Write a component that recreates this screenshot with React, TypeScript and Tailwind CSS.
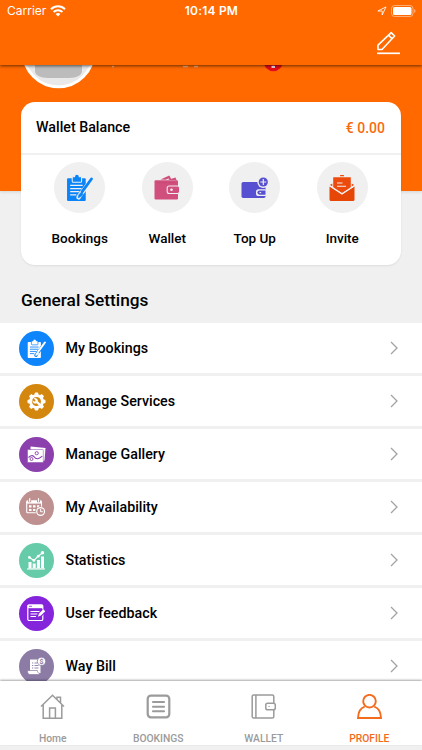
import type { ReactNode } from "react";

type IconProps = { fg: string; bg: string; size: number };

function ClipboardIcon({ fg, bg, size }: IconProps) {
  return (
    <svg width={size} height={size} viewBox="-1 0 26 26" fill="none">
      <path d="M1 4h16a1 1 0 0 1 1 1v20a1 1 0 0 1-1 1H1a1 1 0 0 1-1-1V5a1 1 0 0 1 1-1z" fill={fg} />
      <path d="M5 2.6h2.2a2.3 2.3 0 0 1 4.6 0H14V7a1 1 0 0 1-1 1H6a1 1 0 0 1-1-1z" fill={fg} stroke={bg} strokeWidth="1" />
      <path d="M3 11h12M3 14h11M3 17h9M3 20h6" stroke={bg} strokeWidth="1.2" />
      <path d="M24 5.2 12.2 20.6l-1 1.800" stroke={bg} strokeWidth="4.400" strokeLinecap="round" />
      <path d="M23.5 4.8 14.6 17" stroke={fg} strokeWidth="2.7" strokeLinecap="round" />
      <path d="m13.6 17.600-2.200 2.400-.7 3 2.800-1.400 2.100-2.400z" fill={fg} stroke={fg} strokeWidth=".6" />
    </svg>
  );
}

function WalletIcon() {
  return (
    <svg width="26" height="25" viewBox="-.5 0 26 25" fill="none">
      <path d="m6 4.500 8.800-4 1.800 3.200-1.700.8-.6-1.100-3.300 1.300zM13 5l8-2.600L22 5z" fill="#d04f7d" />
      <rect x="0" y="5.300" width="23.500" height="19.200" rx="1.200" fill="#d04f7d" />
      <path d="M2.500 7.700h18" stroke="#c84674" strokeWidth=".8" />
      <rect x="12.700" y="11" width="12.400" height="7.500" rx="2" fill="#d04f7d" stroke="#f0f0f0" strokeWidth="1.100" />
      <circle cx="17" cy="14.700" r="1.300" fill="#f0f0f0" />
    </svg>
  );
}

function TopUpIcon() {
  return (
    <svg width="28" height="22" viewBox="0 0 28 22" fill="none">
      <rect x=".5" y="5" width="24" height="16" rx="1.700" fill="#5750d1" />
      <circle cx="22.300" cy="5" r="6" fill="#f0f0f0" />
      <circle cx="22.300" cy="5" r="4.600" fill="#5750d1" />
      <path d="M22.300 2v6M19.300 5h6" stroke="#f0f0f0" strokeWidth="1.200" />
      <rect x="15" y="12.200" width="11" height="6.800" rx="2.600" fill="#f0f0f0" />
      <path d="M24.500 13.500h-6a2.100 2.100 0 0 0 0 4.200h6z" fill="#5750d1" />
      <path d="M18.500 15.600h1.700" stroke="#f0f0f0" strokeWidth="1.100" />
    </svg>
  );
}

function InviteIcon() {
  return (
    <svg width="26" height="26" viewBox="0 0 26 26" fill="none">
      <path d="M11 1.200a2 2 0 0 1 4 0z" fill="#ec4b0d" />
      <path d="M4.200 2.200h17.600v10.700L13 18l-8.800-5.100z" fill="#ec4b0d" />
      <path d="M3.300 8.400v3L.8 10zM22.700 8.400v3l2.500-1.400z" fill="#ec4b0d" />
      <path d="m.5 11.400 12.500 7.700 12.500-7.700V24.500a1.500 1.500 0 0 1-1.500 1.500H2a1.500 1.500 0 0 1-1.500-1.500z" fill="#e64707" />
      <path d="m1 10.900 12 8.100 12-8.100" stroke="#f0f0f0" strokeWidth="1.300" />
      <path d="M8 8h5.500M8 11.300h9" stroke="#f0f0f0" strokeWidth="1.100" />
    </svg>
  );
}

function GearIcon() {
  const teeth = [0, 45, 90, 135, 180, 225, 270, 315];
  return (
    <svg width="19" height="19" viewBox="0 0 20 20" fill="none">
      {teeth.map((angle) => (
        <path key={angle} d="M8.300 3 8.700 1h2.600l.4 2z" fill="#fff" stroke="#fff" strokeLinejoin="round" transform={`rotate(${angle} 10 10)`} />
      ))}
      <circle cx="10" cy="10" r="6.200" stroke="#fff" strokeWidth="3" />
      <path d="m9.500 9.500 4.800 4.800" stroke="#fff" strokeWidth="2.400" />
      <path d="M7 6.800 8.900 8.700 8.700 10 7.500 10.100 5.900 8.400A3 3 0 0 0 9.500 12 3 3 0 0 0 11.300 8.300 3 3 0 0 0 7 6.800z" fill="#fff" />
    </svg>
  );
}

function GalleryIcon() {
  return (
    <svg width="19" height="17" viewBox="0 0 19 17" fill="none">
      <path d="m3.500 3 .1-2.400L18.500 2l-1 12.500-2 .4" fill="#fff" />
      <rect x=".5" y="3.500" width="15.800" height="13" rx=".6" fill="#fff" stroke="#8b40ad" strokeWidth=".5" />
      <path d="M1.500 11.500c2-2 4-2.500 5.500-.8 2 2.800 4.500 2.800 8.300-.5" stroke="#8b40ad" strokeWidth="1.100" />
      <circle cx="9.700" cy="7.200" r="1.600" stroke="#8b40ad" strokeWidth=".9" />
      <circle cx="4.500" cy="13" r="1.500" stroke="#8b40ad" strokeWidth=".9" />
    </svg>
  );
}

function CalendarIcon() {
  return (
    <svg width="20" height="19" viewBox="0 0 20 19" fill="none">
      <rect x=".7" y="2.700" width="14.800" height="12" rx="1" stroke="#fff" strokeWidth="1.100" />
      <path d="M.7 3h14.800v2.600H.7z" fill="#fff" />
      <path d="M3.700.3v4M12.500.3v4" stroke="#be9090" strokeWidth="3" />
      <path d="M3.700.3v3.500M12.500.3v3.500" stroke="#fff" strokeWidth="1.200" />
      <path d="M3 7.300h2.500v2.200H3zM7 7.300h2.500v2.200H7zM11 7.300h2.300v2.200H11zM3 11h2.500v2.100H3zM7 11h2.500v2.100H7z" fill="#fff" />
      <circle cx="14.600" cy="13.500" r="5.100" fill="#be9090" />
      <circle cx="14.600" cy="13.500" r="3.900" stroke="#fff" strokeWidth="1.200" />
      <path d="M14.600 11v2.700h2.200" stroke="#fff" />
    </svg>
  );
}

function StatisticsIcon() {
  return (
    <svg width="18" height="19" viewBox="0 0 18 19" fill="none">
      <path d="M.2 17.900h17.600" stroke="#fff" strokeWidth="1.300" />
      <path d="M1.500 11h3v6h-3zM5.700 12.500h3v4.500h-3zM9.900 9h3v8h-3zM14 5.500h3v11.500h-3z" fill="#fff" />
      <path d="m2.500 6.500 4.400 3 4.300-4.300L15.300 2" stroke="#fff" strokeWidth="1.100" />
      <g fill="#fff"><circle cx="2.400" cy="6.400" r="1.400" /><circle cx="6.900" cy="9.400" r="1.400" /><circle cx="11.200" cy="5.200" r="1.400" /><circle cx="15.500" cy="1.800" r="1.700" /></g>
    </svg>
  );
}

function FeedbackIcon() {
  return (
    <svg width="19" height="18" viewBox="0 0 19 18" fill="none">
      <rect x=".8" y=".8" width="15" height="15.700" rx="1.300" stroke="#fff" strokeWidth="1.200" />
      <path d="M.8 1h15v3.200H.8z" fill="#fff" />
      <path d="M2 2.300h3" stroke="#8425dc" strokeWidth=".8" />
      <path d="M3.500 7.500h9M3.500 10h7M3.500 12.500h5.500" stroke="#fff" />
      <path d="m17.500 6.500-5.700 5.800" stroke="#8425dc" strokeWidth="4.300" />
      <path d="m17.300 6.200-4.600 4.500" stroke="#fff" strokeWidth="2.700" />
      <path d="m12 9.700 1.800 1.800-3 1.200z" fill="#fff" />
    </svg>
  );
}

function BillIcon() {
  return (
    <svg width="19" height="18" viewBox="0 0 19 18" fill="none">
      <path d="M3 2.500h10.500V16H3z" fill="#fff" />
      <path d="M.5 13.500h10c0 2 .5 2.500 2 2.700v1.300H3c-1.700 0-2.500-1.200-2.500-4z" fill="#fff" stroke="#8b7ba5" strokeWidth=".7" />
      <path d="M5 6h1.300M5 8.500h1.300M5 11h1.300M7.500 6H10M7.500 8.500h4M7.500 11h4" stroke="#8b7ba5" strokeWidth=".9" />
      <circle cx="14.500" cy="4.400" r="4.200" fill="#fff" stroke="#8b7ba5" strokeWidth=".8" />
      <text x="14.500" y="6.900" textAnchor="middle" fontSize="7" fontWeight="700" fill="#8b7ba5">$</text>
    </svg>
  );
}

const actions: { label: string; icon: ReactNode }[] = [
  { label: "Bookings", icon: <ClipboardIcon fg="#0b84f8" bg="#f0f0f0" size={27} /> },
  { label: "Wallet", icon: <WalletIcon /> },
  { label: "Top Up", icon: <TopUpIcon /> },
  { label: "Invite", icon: <InviteIcon /> },
];

const settings: { label: string; color: string; icon: ReactNode }[] = [
  { label: "My Bookings", color: "bg-[#0f85fc]", icon: <ClipboardIcon fg="#fff" bg="#0f85fc" size={19} /> },
  { label: "Manage Services", color: "bg-[#d4870f]", icon: <GearIcon /> },
  { label: "Manage Gallery", color: "bg-[#8b40ad]", icon: <GalleryIcon /> },
  { label: "My Availability", color: "bg-[#be9090]", icon: <CalendarIcon /> },
  { label: "Statistics", color: "bg-[#66cba8]", icon: <StatisticsIcon /> },
  { label: "User feedback", color: "bg-[#8425dc]", icon: <FeedbackIcon /> },
  { label: "Way Bill", color: "bg-[#8b7ba5]", icon: <BillIcon /> },
];

const tabs: { label: string; active?: boolean; icon: ReactNode }[] = [
  { label: "Home", icon: <path d="M1 12.500 12.500 1.200 24 12.500M3.200 11v13.300h18.600V11M9.600 24V14h5.800v10M17 5V3.300h3.500v5.500" strokeWidth="1.500" /> },
  {
    label: "BOOKINGS",
    icon: <><rect x="1.700" y="1.700" width="21.600" height="21.600" rx="3.200" strokeWidth="2.200" /><path d="M7 8h11M7 12.700h11M7 17.300h11" strokeWidth="2.100" strokeLinecap="round" /></>,
  },
  {
    label: "WALLET",
    icon: <><rect x="1.200" y=".9" width="21.600" height="23.200" rx="1.500" strokeWidth="1.500" /><path d="M4.900 1v23" strokeWidth="1.500" /><rect x="14.800" y="9.200" width="9.500" height="6.600" rx="1.800" strokeWidth="1.500" fill="#fff" /><path d="M17.500 12.500h1.200" strokeWidth="1.200" /></>,
  },
  {
    label: "PROFILE",
    active: true,
    icon: <><circle cx="12.500" cy="7.200" r="6.300" strokeWidth="1.900" /><path d="M7.700 12.700C3.800 14 1.200 17.800 1 24h23c-.2-6.200-2.800-10-6.700-11.300" strokeWidth="1.900" /></>,
  },
];

function StatusBar() {
  return (
    <div className="grid h-[22px] grid-cols-3 items-center pr-[6px] pl-[7px] font-[Inter,sans-serif] text-white">
      <div className="flex items-center gap-1 text-[12px]">
        <span>Carrier</span>
        <svg width="16" height="12" viewBox="0 0 16 12" fill="none" stroke="#fff" strokeWidth="2">
          <path d="M1 4.200a10 10 0 0 1 14 0M3.600 7a6.300 6.300 0 0 1 8.800 0" />
          <path d="M8 11.500 5.600 9.100a3.500 3.500 0 0 1 4.800 0z" fill="#fff" stroke="none" />
        </svg>
      </div>
      <div className="text-center text-[12px] font-semibold tracking-[0.200px]">10:14 PM</div>
      <div className="flex items-center justify-end gap-1">
        <svg width="10" height="10" viewBox="0 0 10 10" fill="none" stroke="#fff" strokeOpacity=".85"><path d="M.9 5 9 .9 5.200 9V5z" /></svg>
        <svg width="25" height="12" viewBox="0 0 25 12">
          <rect x=".5" y=".5" width="21.500" height="11" rx="3" fill="none" stroke="#fff" strokeOpacity=".45" />
          <rect x="2" y="2" width="18.500" height="8" rx="1.500" fill="#fff" />
          <path d="M23.200 4v4q1.300-.5 1.300-2t-1.300-2z" fill="#fff" fillOpacity=".5" />
        </svg>
      </div>
    </div>
  );
}

export default function App() {
  return (
    <div className="flex h-[750px] w-full flex-col overflow-hidden bg-[#f0f0f0] font-[Roboto,sans-serif] text-black">
      <header className="z-10 h-[65px] shrink-0 bg-[#ff6900] shadow-[0_1px_3px_rgba(0,0,0,0.6)]">
        <StatusBar />
        <div className="flex justify-end pt-[9px] pr-[21px]">
          <svg width="25" height="24" viewBox="0 0 25 24" fill="none" stroke="#fff" strokeWidth="1.600" strokeLinejoin="round">
            <path d="M2 18.500v-4.300L15.200 1.600l3.400 3.400L6 18.500zM12.600 4.200l3.400 3.400" />
            <path d="M1 22.300h23" strokeWidth="1.700" />
          </svg>
        </div>
      </header>

      <main className="min-h-0 flex-1 overflow-hidden">
        <section className="h-[126px] bg-[#ff6900] px-[21px] shadow-[0_1px_3px_rgba(0,0,0,0.12)]">
          <div className="flex h-[37px] items-start">
            <svg width="300" height="24" viewBox="0 0 300 24">
              <circle cx="37.500" cy="-13.500" r="35.300" fill="#e9e9e9" stroke="#fff" strokeWidth="2.800" />
              <path d="M14 0h47v6c0 4-5 7-13 7H27C19 13 14 10 14 6z" fill="#bcbcbc" />
              <path d="M91 1.500h2M162 1.500h5M173 1.500h4" stroke="#f4b183" strokeWidth="1.500" />
              <circle cx="252.300" cy="-3" r="9.300" fill="#e60b18" />
              <path d="M250.500 1.800h3.500" stroke="#fff" strokeWidth="2" />
            </svg>
          </div>
          <div className="flex h-[163px] flex-col rounded-[14px] bg-white shadow-[0_1px_2px_rgba(0,0,0,0.08)]">
            <div className="flex h-[53px] items-center justify-between border-b-2 border-[#f0f0f0] pt-px pr-[16px] pl-[15px] text-[14.250px] font-medium">
              <span>Wallet Balance</span>
              <span className="text-[14px] text-[#f86a10]">€ 0.00</span>
            </div>
            <div className="grid grid-cols-4 px-[15px] pt-[7px]">
              {actions.map((action) => (
                <div key={action.label} className="flex flex-col items-center gap-[15px]">
                  <div className="flex size-[51px] items-center justify-center rounded-full bg-[#f0f0f0]">{action.icon}</div>
                  <span className="text-[13.500px] leading-[20px] font-medium">{action.label}</span>
                </div>
              ))}
            </div>
          </div>
        </section>

        <section className="pt-[96px]">
          <h2 className="mb-[10px] px-[21px] text-[17.250px] leading-[26px] font-medium">General Settings</h2>
          <ul className="flex flex-col gap-[3px]">
            {settings.map((item) => (
              <li key={item.label} className="flex h-[50px] shrink-0 items-center bg-white pr-[24px] pl-[18.500px]">
                <span className={`flex size-[35px] shrink-0 items-center justify-center rounded-full ${item.color}`}>{item.icon}</span>
                <span className="ml-3 flex-1 pt-0.5 text-[14.250px] font-medium">{item.label}</span>
                <svg width="8" height="14" viewBox="0 0 8 14" fill="none" stroke="#a3a3a3" strokeWidth="1.300"><path d="m1 1 6 6-6 6" /></svg>
              </li>
            ))}
          </ul>
        </section>
      </main>

      <nav className="z-10 mb-[5px] grid h-[64px] shrink-0 grid-cols-4 bg-white shadow-[0_-1px_2px_rgba(0,0,0,0.35)]">
        {tabs.map((tab) => (
          <div key={tab.label} className={`flex flex-col items-center pt-[13px] ${tab.active ? "text-[#f36b1c]" : "text-[#9b9b9b]"}`}>
            <svg width="25" height="25" viewBox="0 0 25 25" fill="none" stroke="currentColor">{tab.icon}</svg>
            <span className="mt-[13px] text-[10.300px] leading-[14px] font-medium">{tab.label}</span>
          </div>
        ))}
      </nav>
    </div>
  );
}
